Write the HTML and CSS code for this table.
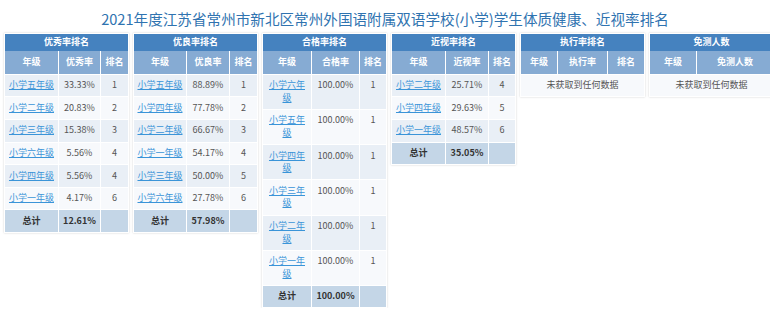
FILE: index.html
```html
<!DOCTYPE html>
<html lang="zh">
<head>
<meta charset="utf-8">
<title>排名</title>
<link rel="stylesheet" href="styles.css">
</head>
<body>
<h1 class="title">2021年度江苏省常州市新北区常州外国语附属双语学校(小学)学生体质健康、近视率排名</h1>
<div class="grid">
  <table class="rank">
    <colgroup><col class="w54"><col class="w42"><col class="w28"></colgroup>
    <tr class="head"><th colspan="3">优秀率排名</th></tr>
    <tr class="sub"><th>年级</th><th>优秀率</th><th>排名</th></tr>
    <tr class="odd"><td><a href="#">小学五年级</a></td><td>33.33%</td><td>1</td></tr>
    <tr class="even"><td><a href="#">小学二年级</a></td><td>20.83%</td><td>2</td></tr>
    <tr class="odd"><td><a href="#">小学三年级</a></td><td>15.38%</td><td>3</td></tr>
    <tr class="even"><td><a href="#">小学六年级</a></td><td>5.56%</td><td>4</td></tr>
    <tr class="odd"><td><a href="#">小学四年级</a></td><td>5.56%</td><td>4</td></tr>
    <tr class="even"><td><a href="#">小学一年级</a></td><td>4.17%</td><td>6</td></tr>
    <tr class="total"><td>总计</td><td>12.61%</td><td></td></tr>
  </table>
  <table class="rank">
    <colgroup><col class="w53"><col class="w43"><col class="w28"></colgroup>
    <tr class="head"><th colspan="3">优良率排名</th></tr>
    <tr class="sub"><th>年级</th><th>优良率</th><th>排名</th></tr>
    <tr class="odd"><td><a href="#">小学五年级</a></td><td>88.89%</td><td>1</td></tr>
    <tr class="even"><td><a href="#">小学四年级</a></td><td>77.78%</td><td>2</td></tr>
    <tr class="odd"><td><a href="#">小学二年级</a></td><td>66.67%</td><td>3</td></tr>
    <tr class="even"><td><a href="#">小学一年级</a></td><td>54.17%</td><td>4</td></tr>
    <tr class="odd"><td><a href="#">小学三年级</a></td><td>50.00%</td><td>5</td></tr>
    <tr class="even"><td><a href="#">小学六年级</a></td><td>27.78%</td><td>6</td></tr>
    <tr class="total"><td>总计</td><td>57.98%</td><td></td></tr>
  </table>
  <table class="rank">
    <colgroup><col class="w49"><col class="w48"><col class="w27"></colgroup>
    <tr class="head"><th colspan="3">合格率排名</th></tr>
    <tr class="sub"><th>年级</th><th>合格率</th><th>排名</th></tr>
    <tr class="odd"><td class="wrap"><a href="#">小学六年级</a></td><td>100.00%</td><td>1</td></tr>
    <tr class="even"><td class="wrap"><a href="#">小学五年级</a></td><td>100.00%</td><td>1</td></tr>
    <tr class="odd"><td class="wrap"><a href="#">小学四年级</a></td><td>100.00%</td><td>1</td></tr>
    <tr class="even"><td class="wrap"><a href="#">小学三年级</a></td><td>100.00%</td><td>1</td></tr>
    <tr class="odd"><td class="wrap"><a href="#">小学二年级</a></td><td>100.00%</td><td>1</td></tr>
    <tr class="even"><td class="wrap"><a href="#">小学一年级</a></td><td>100.00%</td><td>1</td></tr>
    <tr class="total"><td>总计</td><td>100.00%</td><td></td></tr>
  </table>
  <table class="rank">
    <colgroup><col class="w54"><col class="w43"><col class="w27"></colgroup>
    <tr class="head"><th colspan="3">近视率排名</th></tr>
    <tr class="sub"><th>年级</th><th>近视率</th><th>排名</th></tr>
    <tr class="odd"><td><a href="#">小学二年级</a></td><td>25.71%</td><td>4</td></tr>
    <tr class="even"><td><a href="#">小学四年级</a></td><td>29.63%</td><td>5</td></tr>
    <tr class="odd"><td><a href="#">小学一年级</a></td><td>48.57%</td><td>6</td></tr>
    <tr class="total"><td>总计</td><td>35.05%</td><td></td></tr>
  </table>
  <table class="rank">
    <colgroup><col class="w37"><col class="w50"><col class="w37"></colgroup>
    <tr class="head"><th colspan="3">执行率排名</th></tr>
    <tr class="sub"><th>年级</th><th>执行率</th><th>排名</th></tr>
    <tr class="empty"><td colspan="3">未获取到任何数据</td></tr>
  </table>
  <table class="rank">
    <colgroup><col class="w47"><col class="w77"></colgroup>
    <tr class="head"><th colspan="2">免测人数</th></tr>
    <tr class="sub"><th>年级</th><th>免测人数</th></tr>
    <tr class="empty"><td colspan="2">未获取到任何数据</td></tr>
  </table>
</div>
</body>
</html>
```

FILE: styles.css
```css
* { box-sizing: border-box; }
html, body { margin: 0; padding: 0; background: #ffffff; }
body {
  font-family: "Noto Sans CJK SC", "Noto Sans", sans-serif;
  color: #555;
}
.title {
  margin: 9px 0 4px;
  font-size: 14.6px;
  line-height: 20px;
  font-weight: normal;
  text-align: center;
  color: #2f73b0;
}
.grid {
  display: grid;
  grid-template-columns: repeat(6, 1fr);
  column-gap: 4px;
  padding: 0 1px 0 4px;
  align-items: start;
}
.rank {
  width: 100%;
  table-layout: fixed;
  border-collapse: collapse;
  font-size: 9px;
  line-height: 12.6px;
  text-align: center;
  box-shadow: 0 0 2px rgba(0, 0, 0, 0.18);
}
.w27 { width: 27px; } .w28 { width: 28px; } .w37 { width: 37px; }
.w42 { width: 42px; } .w43 { width: 43px; } .w47 { width: 47px; }
.w48 { width: 48px; } .w49 { width: 49px; } .w50 { width: 50px; }
.w53 { width: 53px; } .w54 { width: 54px; } .w77 { width: 77px; }
.rank th, .rank td {
  border: 1px solid #ffffff;
  vertical-align: top;
}
.rank th { color: #ffffff; font-weight: bold; padding-left: 2px; padding-right: 2px; }
.head th {
  background: #4582bf;
  padding-top: 2.4px;
  padding-bottom: 2.4px;
  border-bottom: none;
}
.sub th {
  background: #86abd3;
  padding-top: 4.9px;
  padding-bottom: 4.9px;
  border-top: none;
}
.rank td { padding: 4.5px 2px; }
.rank td.wrap { padding-left: 3px; padding-right: 3px; }
.odd td { background: #e9eff6; }
.even td { background: #f7f9fc; }
.total td { background: #c4d6e7; color: #333; font-weight: bold; }
.empty td { background: #f7f9fc; color: #555; }
.rank a { color: #3a94d8; text-decoration: underline; }
```
